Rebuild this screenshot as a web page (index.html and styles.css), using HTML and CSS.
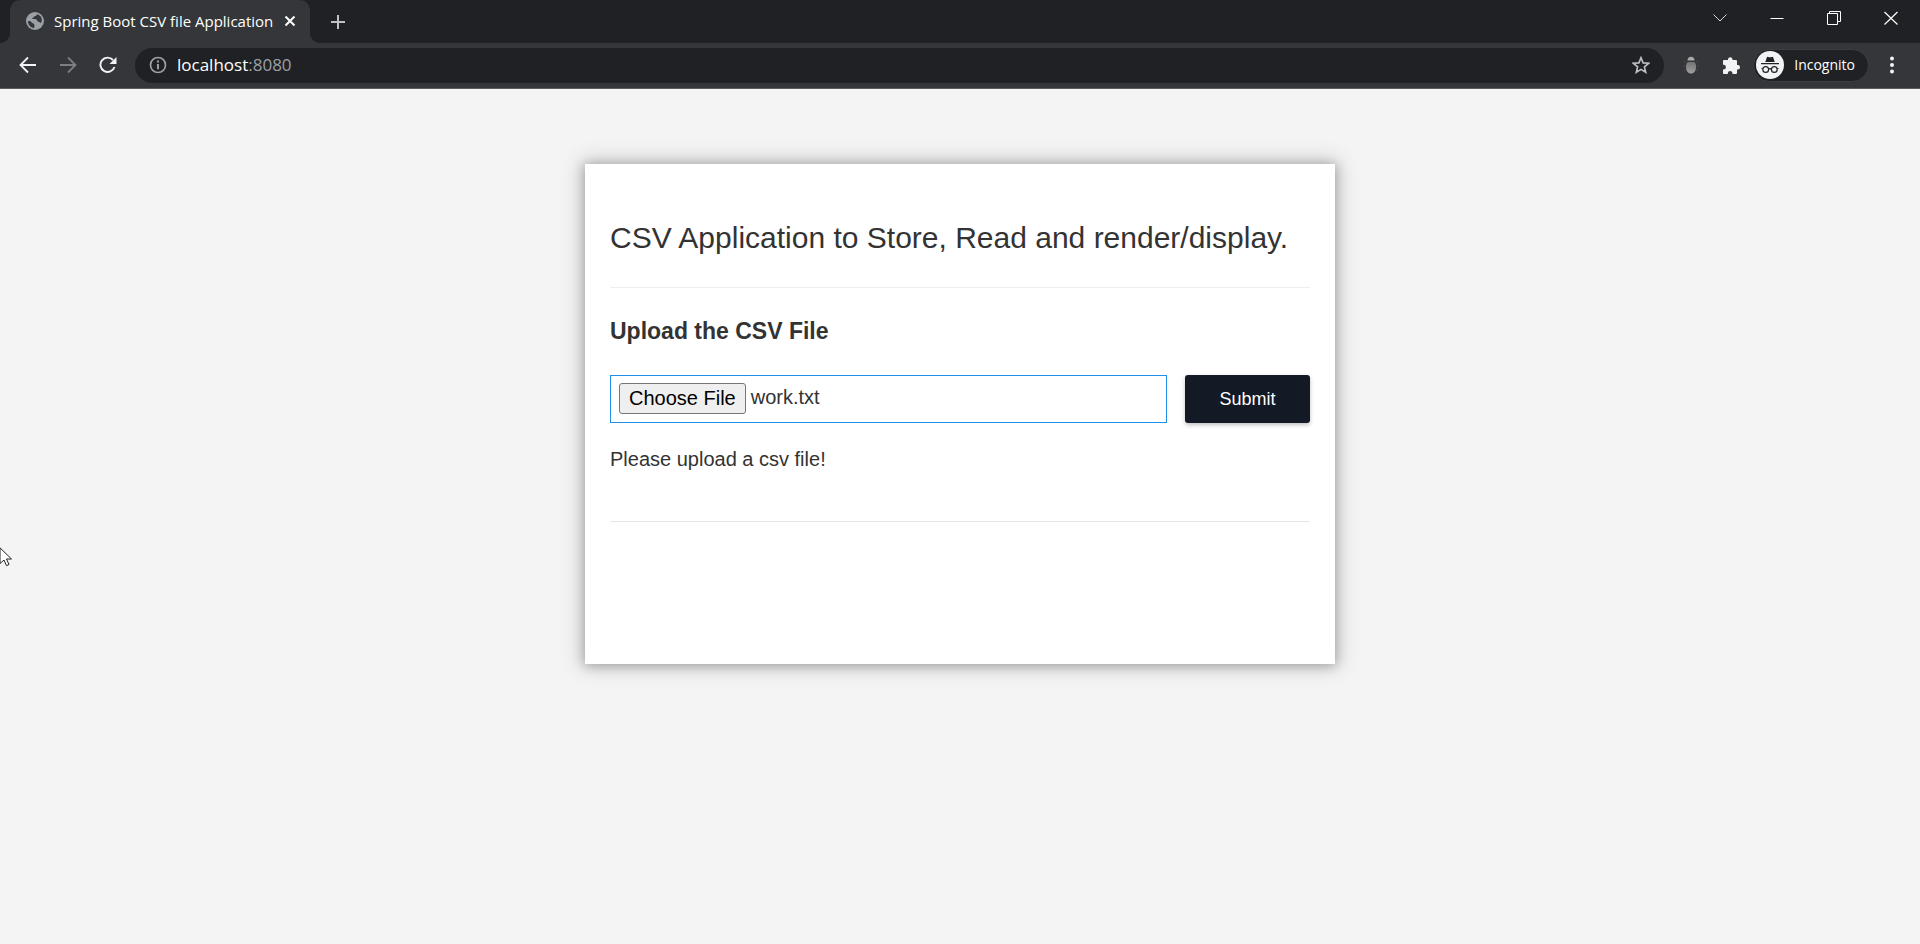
FILE: index.html
```html
<!DOCTYPE html>
<html lang="en">
<head>
<meta charset="utf-8">
<title>Spring Boot CSV file Application</title>
<link rel="stylesheet" href="styles.css">
</head>
<body>
<header class="browser">
  <div class="tab-strip">
    <div class="tab">
      <svg class="favicon" width="18" height="18" viewBox="0 0 18 18"><circle cx="9" cy="9" r="9" fill="#9aa0a6"/><path d="M2 9c2 0 3 .3 3.600 1.500.5 1 1.700.8 2.400 1.500.8.8.3 2.500.2 4C4.500 15.800 2 12.800 2 9zM11 2.300c-.2 1.200-1 1.800-2.200 1.900-1 .1-1 1.400-2 1.600-.8.300-.6 1.200.2 1.300 1.500.2 3-.2 3.800.6.8 1 .4 2 1.700 2.100 1.300.1 1.500 1.200 2.500 1.200C17 7.500 15.500 3.500 11 2.300z" fill="#35363a"/></svg>
      <span class="tab-title">Spring Boot CSV file Application</span>
      <button class="tab-close" aria-label="Close tab"><svg width="12" height="12" viewBox="0 0 12 12"><path d="M1.500 1.500l9 9M10.500 1.500l-9 9" stroke="#fff" stroke-width="2"/></svg></button>
    </div>
    <button class="new-tab" aria-label="New tab"><svg width="16" height="16" viewBox="0 0 16 16"><path d="M8 1v14M1 8h14" stroke="#bdc1c6" stroke-width="2"/></svg></button>
    <div class="window-buttons">
      <button class="window-button" aria-label="Search tabs"><svg width="14" height="14" viewBox="0 0 14 14"><path d="M.5 3.500L7 10l6.500-6.500" fill="none" stroke="#d5d5d6"/></svg></button>
      <button class="window-button" aria-label="Minimize"><svg width="14" height="14" viewBox="0 0 14 14"><path d="M.5 7.500h13" stroke="#fff"/></svg></button>
      <button class="window-button" aria-label="Restore"><svg width="14" height="14" viewBox="0 0 14 14"><path d="M.5 2.500h10v11H.500zM2.500 2.500v-2h11v10h-3" fill="none" stroke="#fff"/></svg></button>
      <button class="window-button" aria-label="Close"><svg width="14" height="14" viewBox="0 0 14 14"><path d="M.5 1l13 12.500M13.500 1L.500 13.500" stroke="#fff" stroke-width="1.200"/></svg></button>
    </div>
  </div>
  <nav class="toolbar" aria-label="Browser toolbar">
    <button class="tool" aria-label="Back"><svg width="18" height="18" viewBox="0 0 18 18"><path d="M17 9H2M9 1.500L1.500 9 9 16.500" fill="none" stroke="#f1f3f4" stroke-width="1.800"/></svg></button>
    <button class="tool" aria-label="Forward"><svg width="18" height="18" viewBox="0 0 18 18"><path d="M1 9h15M9 1.500L16.500 9 9 16.500" fill="none" stroke="#7d7e82" stroke-width="1.800"/></svg></button>
    <button class="tool" aria-label="Reload"><svg width="18" height="18" viewBox="0 0 18 18"><path d="M14 4A7.200 7.200 0 1 0 15.500 11" fill="none" stroke="#f1f3f4" stroke-width="1.900"/><path d="M17.500 1v7h-7z" fill="#f1f3f4"/></svg></button>
    <div class="address">
      <svg width="18" height="18" viewBox="0 0 18 18"><circle cx="9" cy="9" r="7.500" fill="none" stroke="#9aa0a6" stroke-width="1.700"/><path d="M9 4.500v2M9 8v5.200" stroke="#9aa0a6" stroke-width="2"/></svg>
      <span class="url">localhost<span class="port">:8080</span></span>
      <button class="star" aria-label="Bookmark this page"><svg width="18" height="18" viewBox="0 0 18 18"><path d="M9 1.700l2.100 5.200 5.500.4-4.200 3.600 1.300 5.400L9 13.400l-4.700 2.900 1.300-5.400L1.400 7.300l5.500-.4z" fill="none" stroke="#bdc1c6" stroke-width="1.600"/></svg></button>
    </div>
    <button class="tool" aria-label="Extension"><svg width="18" height="18" viewBox="0 0 18 18"><defs><linearGradient id="bug" x2="0" y2="1"><stop offset="0" stop-color="#737373"/><stop offset="1" stop-color="#a0a0a0"/></linearGradient></defs><path d="M5.500 4.500C5.500 2 7 .8 9 .8s3.500 1.200 3.500 3.700z" fill="#aaa"/><path d="M6.500 6h5c1.500 0 2.500 1.500 2.500 4.500 0 4.500-2 7-5 7s-5-2.500-5-7C4 7.500 5 6 6.500 6z" fill="url(#bug)"/><path d="M1.500 5l2 1M1 10h2M2 15l1.800-1.200M16.500 5l-2 1M17 10h-2M16 15l-1.800-1.200" stroke="#4b4c50"/></svg></button>
    <button class="tool" aria-label="Extensions"><svg width="19" height="19" viewBox="0 0 19 19"><path d="M2 4h4V3a2.300 2.300 0 0 1 4.500 0v1H14a1 1 0 0 1 1 1v4h1.200a2.300 2.300 0 0 1 0 4.500H15V17a1 1 0 0 1-1 1h-3.500v-1a2.400 2.400 0 0 0-4.700 0v1H2a1 1 0 0 1-1-1v-3.500h1a2.400 2.400 0 0 0 0-4.700H1V5a1 1 0 0 1 1-1z" fill="#f1f3f4"/></svg></button>
    <button class="profile">
      <svg width="28" height="28" viewBox="0 0 28 28"><circle cx="14" cy="14" r="14" fill="#f1f3f4"/><path d="M5 12h18v1.200H5zM9.300 11l1.500-4.500c.3-.7.700-.8 1.300-.6 1.300.5 2.500.5 3.800 0 .6-.2 1-.1 1.300.6l1.500 4.500z" fill="#202124"/><g fill="none" stroke="#202124" stroke-width="1.200"><circle cx="9.700" cy="18.500" r="2.900"/><circle cx="18.300" cy="18.500" r="2.900"/><path d="M12.600 18.200q1.400-1 2.800 0M5.500 17.500h1.200M21.300 17.500h1.200"/></g></svg>
      <span>Incognito</span>
    </button>
    <button class="tool" aria-label="Menu"><svg width="18" height="18" viewBox="0 0 18 18" fill="#f1f3f4"><circle cx="9" cy="2.500" r="2"/><circle cx="9" cy="9" r="2"/><circle cx="9" cy="15.500" r="2"/></svg></button>
  </nav>
</header>
<main class="page">
  <section class="card">
    <h1 class="title">CSV Application to Store, Read and render/display.</h1>
    <h2 class="subtitle">Upload the CSV File</h2>
    <form class="upload">
      <div class="file-box">
        <input id="file" type="file" hidden>
        <button class="choose" type="button" id="choose">Choose File</button>
        <output class="file-name" id="file-name" for="file">work.txt</output>
      </div>
      <button class="submit" type="button">Submit</button>
    </form>
    <p class="message">Please upload a csv file!</p>
  </section>
</main>
<svg class="pointer" width="12" height="20" viewBox="0 0 12 20"><path d="M-5-4L11.500 12H6.500L9 17.500 6.500 18.700 4 13 0 16.500V1z" fill="#fff" stroke="#222"/></svg>
<script src="upload.js"></script>
</body>
</html>
```
FILE: styles.css
```css
* { box-sizing: border-box; }

body {
  margin: 0;
  min-height: 100vh;
  background: #f4f4f4;
  color: #333;
  font-family: Arial, "Liberation Sans", sans-serif;
}

button {
  padding: 0;
  border: 0;
  background: none;
  color: inherit;
  font: inherit;
}

svg { display: block; flex: none; }

.browser {
  background: #35363a;
  border-bottom: 1px solid #5b5c5f;
  color: #fff;
  font-family: "Segoe UI", "Open Sans", "Noto Sans", sans-serif;
}

.tab-strip {
  display: flex;
  height: 43px;
  padding-left: 10px;
  background: #202124;
}

.tab {
  position: relative;
  display: flex;
  align-items: center;
  width: 300px;
  padding: 0 14px 2px 16px;
  border-radius: 10px 10px 0 0;
  background: #35363a;
}

.tab::before,
.tab::after {
  content: "";
  position: absolute;
  bottom: 0;
  width: 10px;
  height: 10px;
}

.tab::before {
  right: 100%;
  background: radial-gradient(circle at 0 0, #202124 10px, #35363a 10px);
}

.tab::after {
  left: 100%;
  background: radial-gradient(circle at 100% 0, #202124 10px, #35363a 10px);
}

.tab-title {
  flex: 1;
  margin-left: 10px;
  font-size: 15px;
  line-height: 20px;
  white-space: nowrap;
}

.new-tab { padding: 0 20px; }

.window-buttons {
  display: flex;
  height: 36px;
  margin: 0 1px 0 auto;
}

.window-button {
  display: grid;
  place-items: center;
  width: 57px;
}

.toolbar {
  display: flex;
  align-items: center;
  height: 45px;
  padding: 0 8px 1px;
}

.tool {
  display: grid;
  place-items: center;
  width: 40px;
  height: 36px;
}

.address {
  display: flex;
  flex: 1;
  align-items: center;
  height: 35px;
  margin: 0 7px;
  padding: 0 14px;
  border-radius: 18px;
  background: #202124;
}

.url {
  flex: 1;
  margin-left: 10px;
  font-size: 17px;
  line-height: 24px;
}

.port { color: #9aa0a6; }

.profile {
  display: flex;
  align-items: center;
  gap: 10px;
  height: 33px;
  margin: 0 3px 0 2px;
  padding: 0 13px 0 2px;
  border: 1px solid #3c3d41;
  border-radius: 17px;
  background: #202124;
  font-size: 14px;
  line-height: 20px;
}

.page { padding: 75px 16px; }

.card {
  max-width: 750px;
  min-height: 500px;
  margin: 0 auto;
  padding: 51px 25px;
  background: #fff;
  box-shadow: 0 1px 11px rgba(0, 0, 0, 0.27), 0 0 19px 4px rgba(0, 0, 0, 0.17);
}

.title {
  margin: 0;
  padding-bottom: 26px;
  border-bottom: 1px solid #eee;
  font-size: 30px;
  font-weight: 400;
  line-height: 46px;
}

.subtitle {
  margin: 27px 0 28px;
  font-size: 23px;
  font-weight: 700;
  line-height: 32px;
}

.upload {
  display: flex;
  align-items: center;
  gap: 18px;
}

.file-box {
  display: flex;
  flex: 1;
  align-items: flex-start;
  gap: 5px;
  height: 48px;
  padding: 7px 8px;
  border: 1px solid #1f8fea;
  font-size: 20px;
  line-height: 29px;
}

.choose {
  height: 31px;
  padding: 0 9px;
  border: 1px solid #767676;
  border-radius: 3px;
  background: #efefef;
  color: #000;
}

.submit {
  width: 125px;
  height: 48px;
  border-radius: 3px;
  background: #131a26;
  box-shadow: 0 2px 4px rgba(0, 0, 0, 0.25);
  color: #fff;
  font-size: 18px;
}

.message {
  margin: 0;
  padding: 20px 0 46px;
  border-bottom: 1px solid #e6e6e6;
  font-size: 20px;
  line-height: 32px;
}

.pointer {
  position: absolute;
  top: 547px;
  left: 0;
}
```
FILE: upload.js
```js
const file = document.getElementById("file");
document.getElementById("choose").addEventListener("click", () => file.click());
file.addEventListener("change", () => {
  document.getElementById("file-name").value = file.files.length ? file.files[0].name : "";
});
```
